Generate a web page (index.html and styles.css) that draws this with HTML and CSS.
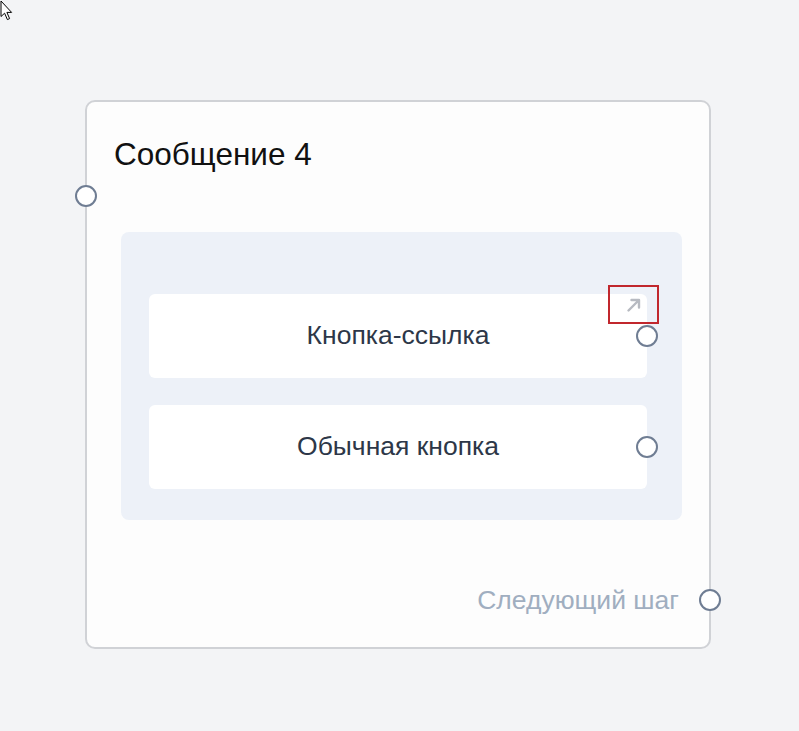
FILE: index.html
```html
<!DOCTYPE html>
<html lang="ru">
<head>
<meta charset="utf-8">
<title>Сообщение 4</title>
<link rel="stylesheet" href="styles.css">
</head>
<body>
<svg class="cursor" width="14" height="22" viewBox="0 0 14 22"><path d="M1 1 L1 16.5 L4.6 13.2 L7.4 19.6 L9.6 18.6 L6.9 12.4 L11.6 12.4 Z" fill="#fff" stroke="#000" stroke-width="1" stroke-linejoin="round"/></svg>
<div class="canvas">
  <div class="card">
    <span class="port port-in"></span>
    <h1 class="title">Сообщение 4</h1>
    <div class="panel">
      <div class="btn">
        <span class="btn-label">Кнопка-ссылка</span>
        <span class="link-mark">
          <svg width="16" height="16" viewBox="0 0 16 16"><path d="M2.5 13.5 L13 3 M5.5 3 H13 V10.5" fill="none" stroke="#b7bac1" stroke-width="2.4" stroke-linecap="round" stroke-linejoin="round"/></svg>
        </span>
        <span class="port port-btn"></span>
      </div>
      <div class="btn">
        <span class="btn-label">Обычная кнопка</span>
        <span class="port port-btn"></span>
      </div>
    </div>
    <div class="footer">
      <span class="next">Следующий шаг</span>
      <span class="port port-out"></span>
    </div>
  </div>
</div>
</body>
</html>
```
FILE: styles.css
```css
html, body {
  margin: 0;
  padding: 0;
}
body {
  background: #f3f4f6;
  font-family: "Liberation Sans", Arial, sans-serif;
  width: 799px;
  height: 731px;
  overflow: hidden;
  position: relative;
}
.cursor {
  position: absolute;
  left: 0;
  top: 0;
}
.canvas {
  padding: 100px 0 0 85px;
}
.card {
  position: relative;
  box-sizing: border-box;
  width: 626px;
  height: 549px;
  border: 2px solid #d0d2d6;
  border-radius: 10px;
  background: #fdfdfd;
  padding-top: 34px;
}
.title {
  margin: 0 0 0 27px;
  font-size: 31.5px;
  line-height: 36px;
  font-weight: 400;
  color: #111;
}
.panel {
  margin: 60px 27px 0 34px;
  padding: 62px 35px 31px 28px;
  background: #edf1f8;
  border-radius: 8px;
  display: flex;
  flex-direction: column;
  gap: 27px;
}
.btn {
  position: relative;
  height: 84px;
  background: #fff;
  border-radius: 6px;
  display: flex;
  align-items: center;
  justify-content: center;
}
.btn-label {
  font-size: 26.5px;
  color: #2d3748;
  line-height: 30px;
  margin-top: -3px;
}
.port {
  box-sizing: border-box;
  width: 22px;
  height: 22px;
  border: 2.6px solid #6f7d93;
  border-radius: 50%;
  background: #fff;
  display: block;
}
.port-in {
  position: absolute;
  left: -12px;
  top: 83px;
}
.port-btn {
  position: absolute;
  right: -11px;
  top: 50%;
  margin-top: -11px;
}
.link-mark {
  position: absolute;
  right: -12px;
  top: -9px;
  box-sizing: border-box;
  width: 51px;
  height: 39px;
  border: 2px solid #c1272d;
  display: flex;
  align-items: center;
  justify-content: center;
}
.footer {
  margin-top: 65px;
  display: flex;
  justify-content: flex-end;
  align-items: center;
  gap: 20px;
}
.next {
  font-size: 26.5px;
  line-height: 30px;
  color: #a0aec0;
}
.port-out {
  margin-right: -12px;
}
```
